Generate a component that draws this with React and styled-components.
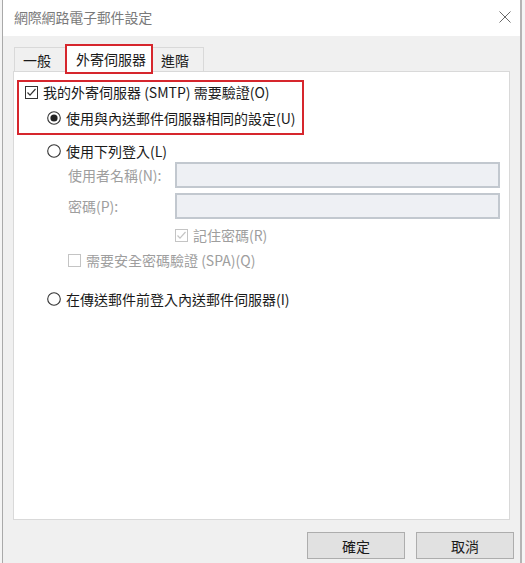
import React from "react";
import styled, { createGlobalStyle } from "styled-components";

const GlobalStyle = createGlobalStyle`
  html, body {
    margin: 0;
    padding: 0;
    background: #f4f4f4;
  }
  body {
    font-family: "Noto Sans CJK TC", "Microsoft JhengHei", sans-serif;
    font-size: 14px;
    color: #1a1a1a;
  }
  * {
    box-sizing: border-box;
  }
`;

function CheckMark({ checked, disabled }) {
  const c = disabled ? "#c4c4c4" : "#333";
  return (
    <svg width="13" height="13" viewBox="0 0 13 13">
      <rect x="0.5" y="0.5" width="12" height="12" fill="#fff" stroke={c} />
      {checked && (
        <polyline
          points="2.5,6.5 5,9.2 10.5,3"
          fill="none"
          stroke={c}
          strokeWidth="1.2"
        />
      )}
    </svg>
  );
}

function RadioMark({ checked }) {
  return (
    <svg width="14" height="14" viewBox="0 0 14 14">
      <circle cx="7" cy="7" r="6.3" fill="#fff" stroke="#333" strokeWidth="1.1" />
      {checked && <circle cx="7" cy="7" r="3.6" fill="#222" />}
    </svg>
  );
}

function CloseIcon() {
  return (
    <svg width="12" height="12" viewBox="0 0 12 12">
      <path d="M0.5 0.5 L11.5 11.5 M11.5 0.5 L0.5 11.5" stroke="#6a6a6a" strokeWidth="1" />
    </svg>
  );
}

export default function App() {
  return (
    <>
      <GlobalStyle />
      <Window>
        <TitleBar>
          <Title>網際網路電子郵件設定</Title>
          <CloseIcon />
        </TitleBar>
        <TabStrip>
          <Tab $w={53}>一般</Tab>
          <Tab $w={88} $active>
            外寄伺服器
          </Tab>
          <Tab $w={52}>進階</Tab>
        </TabStrip>
        <Panel>
          <Highlight>
            <Row>
              <CheckMark checked />
              <span>我的外寄伺服器 (SMTP) 需要驗證(O)</span>
            </Row>
            <Row $indent={22}>
              <RadioMark checked />
              <span>使用與內送郵件伺服器相同的設定(U)</span>
            </Row>
          </Highlight>
          <Row $indent={33} $top={6}>
            <RadioMark />
            <span>使用下列登入(L)</span>
          </Row>
          <FieldRow $top={1}>
            <FieldLabel>使用者名稱(N):</FieldLabel>
            <TextBox />
          </FieldRow>
          <FieldRow $top={5}>
            <FieldLabel>密碼(P):</FieldLabel>
            <TextBox />
          </FieldRow>
          <Row $indent={161} $top={6} $disabled>
            <CheckMark checked disabled />
            <span>記住密碼(R)</span>
          </Row>
          <Row $indent={54} $top={5} $disabled>
            <CheckMark disabled />
            <span>需要安全密碼驗證 (SPA)(Q)</span>
          </Row>
          <Row $indent={33} $top={19}>
            <RadioMark />
            <span>在傳送郵件前登入內送郵件伺服器(I)</span>
          </Row>
        </Panel>
        <ButtonRow>
          <Button>確定</Button>
          <Button>取消</Button>
        </ButtonRow>
      </Window>
    </>
  );
}

const Window = styled.div`
  margin-left: 2px;
  width: 520px;
  height: 563px;
  border-left: 1px solid #a9a9a9;
  border-right: 2px solid #b4b4b4;
  background: #f0f0f0;
  display: flex;
  flex-direction: column;
  overflow: hidden;
`;

const TitleBar = styled.div`
  height: 36px;
  flex-shrink: 0;
  background: #fff;
  display: flex;
  align-items: center;
  justify-content: space-between;
  padding: 0 9px 2px 11px;
`;

const Title = styled.div`
  color: #7a7a7a;
  font-size: 14px;
  line-height: 20px;
  letter-spacing: -0.2px;
`;

const TabStrip = styled.div`
  height: 35px;
  flex-shrink: 0;
  display: flex;
  align-items: flex-end;
  padding-left: 11px;
`;

const Tab = styled.div`
  position: relative;
  width: ${(p) => p.$w}px;
  height: ${(p) => (p.$active ? 30 : 24)}px;
  margin-left: ${(p) => (p.$active ? -2 : 0)}px;
  margin-bottom: ${(p) => (p.$active ? -3 : 0)}px;
  margin-right: ${(p) => (p.$active ? -1 : 0)}px;
  padding-left: ${(p) => (p.$active ? 9 : 8)}px;
  display: flex;
  align-items: center;
  background: ${(p) => (p.$active ? "#fff" : "#f0f0f0")};
  border: ${(p) => (p.$active ? "2px solid #d6262d" : "1px solid #d9d9d9")};
  border-bottom: ${(p) => (p.$active ? "2px solid #d6262d" : "none")};
  z-index: ${(p) => (p.$active ? 2 : 0)};
  line-height: 20px;
  color: #1a1a1a;
`;

const Panel = styled.div`
  margin-left: 10px;
  width: 497px;
  height: 449px;
  flex-shrink: 0;
  background: #fff;
  border: 1px solid #d9d9d9;
  display: flex;
  flex-direction: column;
`;

const Highlight = styled.div`
  margin: 8px 0 0 3px;
  width: 287px;
  height: 55px;
  border: 2px solid #d6262d;
  padding: 0 0 0 6px;
  display: flex;
  flex-direction: column;
  gap: 6px;
`;

const Row = styled.div`
  height: 20px;
  margin-top: ${(p) => p.$top || 0}px;
  padding-left: ${(p) => p.$indent || 0}px;
  display: flex;
  align-items: center;
  gap: 5px;
  line-height: 20px;
  white-space: nowrap;
  color: ${(p) => (p.$disabled ? "#9e9e9e" : "#1a1a1a")};

  svg {
    flex-shrink: 0;
  }
`;

const FieldRow = styled.div`
  height: 26px;
  margin-top: ${(p) => p.$top || 0}px;
  padding-left: 54px;
  display: flex;
  align-items: center;
`;

const FieldLabel = styled.div`
  width: 107px;
  color: #9e9e9e;
  line-height: 20px;
  white-space: nowrap;
`;

const TextBox = styled.div`
  width: 325px;
  height: 26px;
  background: #eef0f4;
  border: 2px solid #c2c8cf;
`;

const ButtonRow = styled.div`
  flex: 1;
  display: flex;
  justify-content: flex-end;
  align-items: flex-start;
  gap: 11px;
  padding: 12px 6px 0 0;
`;

const Button = styled.div`
  width: 98px;
  height: 27px;
  display: flex;
  align-items: center;
  justify-content: center;
  background: #e1e1e1;
  border: 1px solid #adadad;
  font-size: 14px;
  color: #1a1a1a;
`;
